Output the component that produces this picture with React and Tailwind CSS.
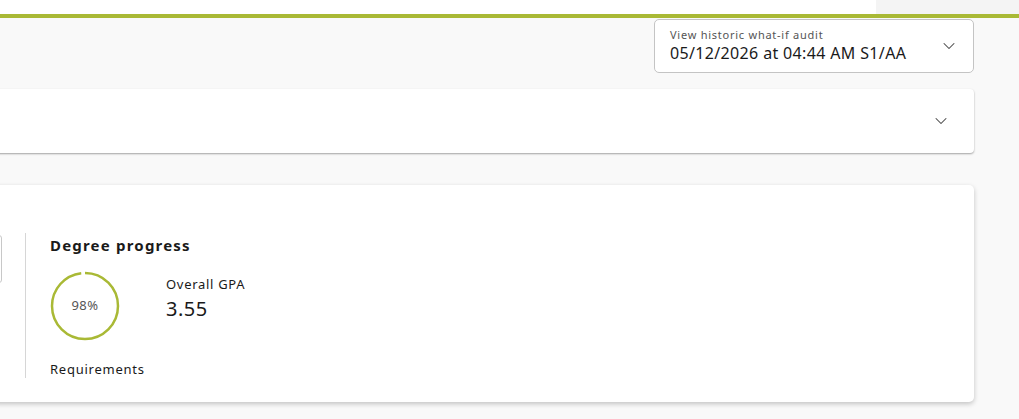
import React from 'react';
import { ChevronDown } from 'lucide-react';

const font = { fontFamily: '"Noto Sans", "Open Sans", sans-serif' };

function ProgressRing({ value }) {
  const r = 33;
  const c = 2 * Math.PI * r;
  return (
    <div className="relative w-[70px] h-[70px]">
      <svg width="70" height="70" viewBox="0 0 70 70" className="-rotate-90">
        <circle
          cx="35"
          cy="35"
          r={r}
          fill="none"
          stroke="#a9b935"
          strokeWidth="2.5"
          strokeDasharray={`${(c * value) / 100} ${c}`}
        />
      </svg>
      <span className="absolute inset-0 flex items-center justify-center text-[13px] tracking-[0.5px] text-[#555]">
        {value}%
      </span>
    </div>
  );
}

export default function App() {
  return (
    <div className="min-h-[419px] w-[1019px] bg-[#f9f9f9] overflow-hidden text-[#1a1a1a]" style={font}>
      {/* top strip */}
      <div className="flex h-[14px]">
        <div className="w-[876px] bg-white" />
        <div className="flex-1 bg-[#f4f4f4]" />
      </div>
      <div className="h-[4px] bg-[#a9b935]" />

      <div className="pr-[45px] pb-[16px]">
        {/* audit selector */}
        <div className="flex justify-end pt-[1px]">
          <button className="w-[320px] h-[54px] flex items-center justify-between pl-[15px] pr-[14px] bg-white border border-[#c4c4c4] rounded-[5px] text-left">
            <div className="flex flex-col">
              <span className="text-[11px] leading-[14px] tracking-[0.75px] text-[#555]">View historic what-if audit</span>
              <span className="text-[16px] leading-[22px] tracking-[0.35px] text-[#1a1a1a]">05/12/2026 at 04:44 AM S1/AA</span>
            </div>
            <ChevronDown size={20} strokeWidth={1.25} className="text-[#444]" />
          </button>
        </div>

        {/* collapsed panel */}
        <div className="mt-[16px] ml-[-8px] h-[64px] bg-white rounded-[4px] shadow-[0_1px_2px_rgba(0,0,0,0.35)] flex items-center justify-end pr-[23px]">
          <ChevronDown size={20} strokeWidth={1.25} className="text-[#444]" />
        </div>

        {/* degree progress card */}
        <div className="mt-[32px] ml-[-8px] h-[217px] bg-white rounded-[5px] shadow-[0_2px_5px_rgba(0,0,0,0.22)] flex items-start pt-[48px]">
          <div className="w-[10px] h-[48px] mt-[2px] border border-[#c8c8c8] rounded-[3px]" />
          <div className="ml-[23px] w-px h-[145px] bg-[#d6d6d6]" />
          <div className="pl-[24px] flex flex-col">
            <h2 className="text-[15px] leading-[20px] font-bold tracking-[1.2px] mt-[2px]">Degree progress</h2>
            <div className="flex items-start mt-[16px]">
              <ProgressRing value={98} />
              <div className="ml-[46px] flex flex-col">
                <span className="text-[13px] leading-[18px] tracking-[0.7px] mt-[4px]">Overall GPA</span>
                <span className="text-[20px] leading-[26px] tracking-[0.5px] mt-[3px]">3.55</span>
              </div>
            </div>
            <span className="text-[13px] leading-[18px] tracking-[0.75px] mt-[19px]">Requirements</span>
          </div>
        </div>
      </div>
    </div>
  );
}
